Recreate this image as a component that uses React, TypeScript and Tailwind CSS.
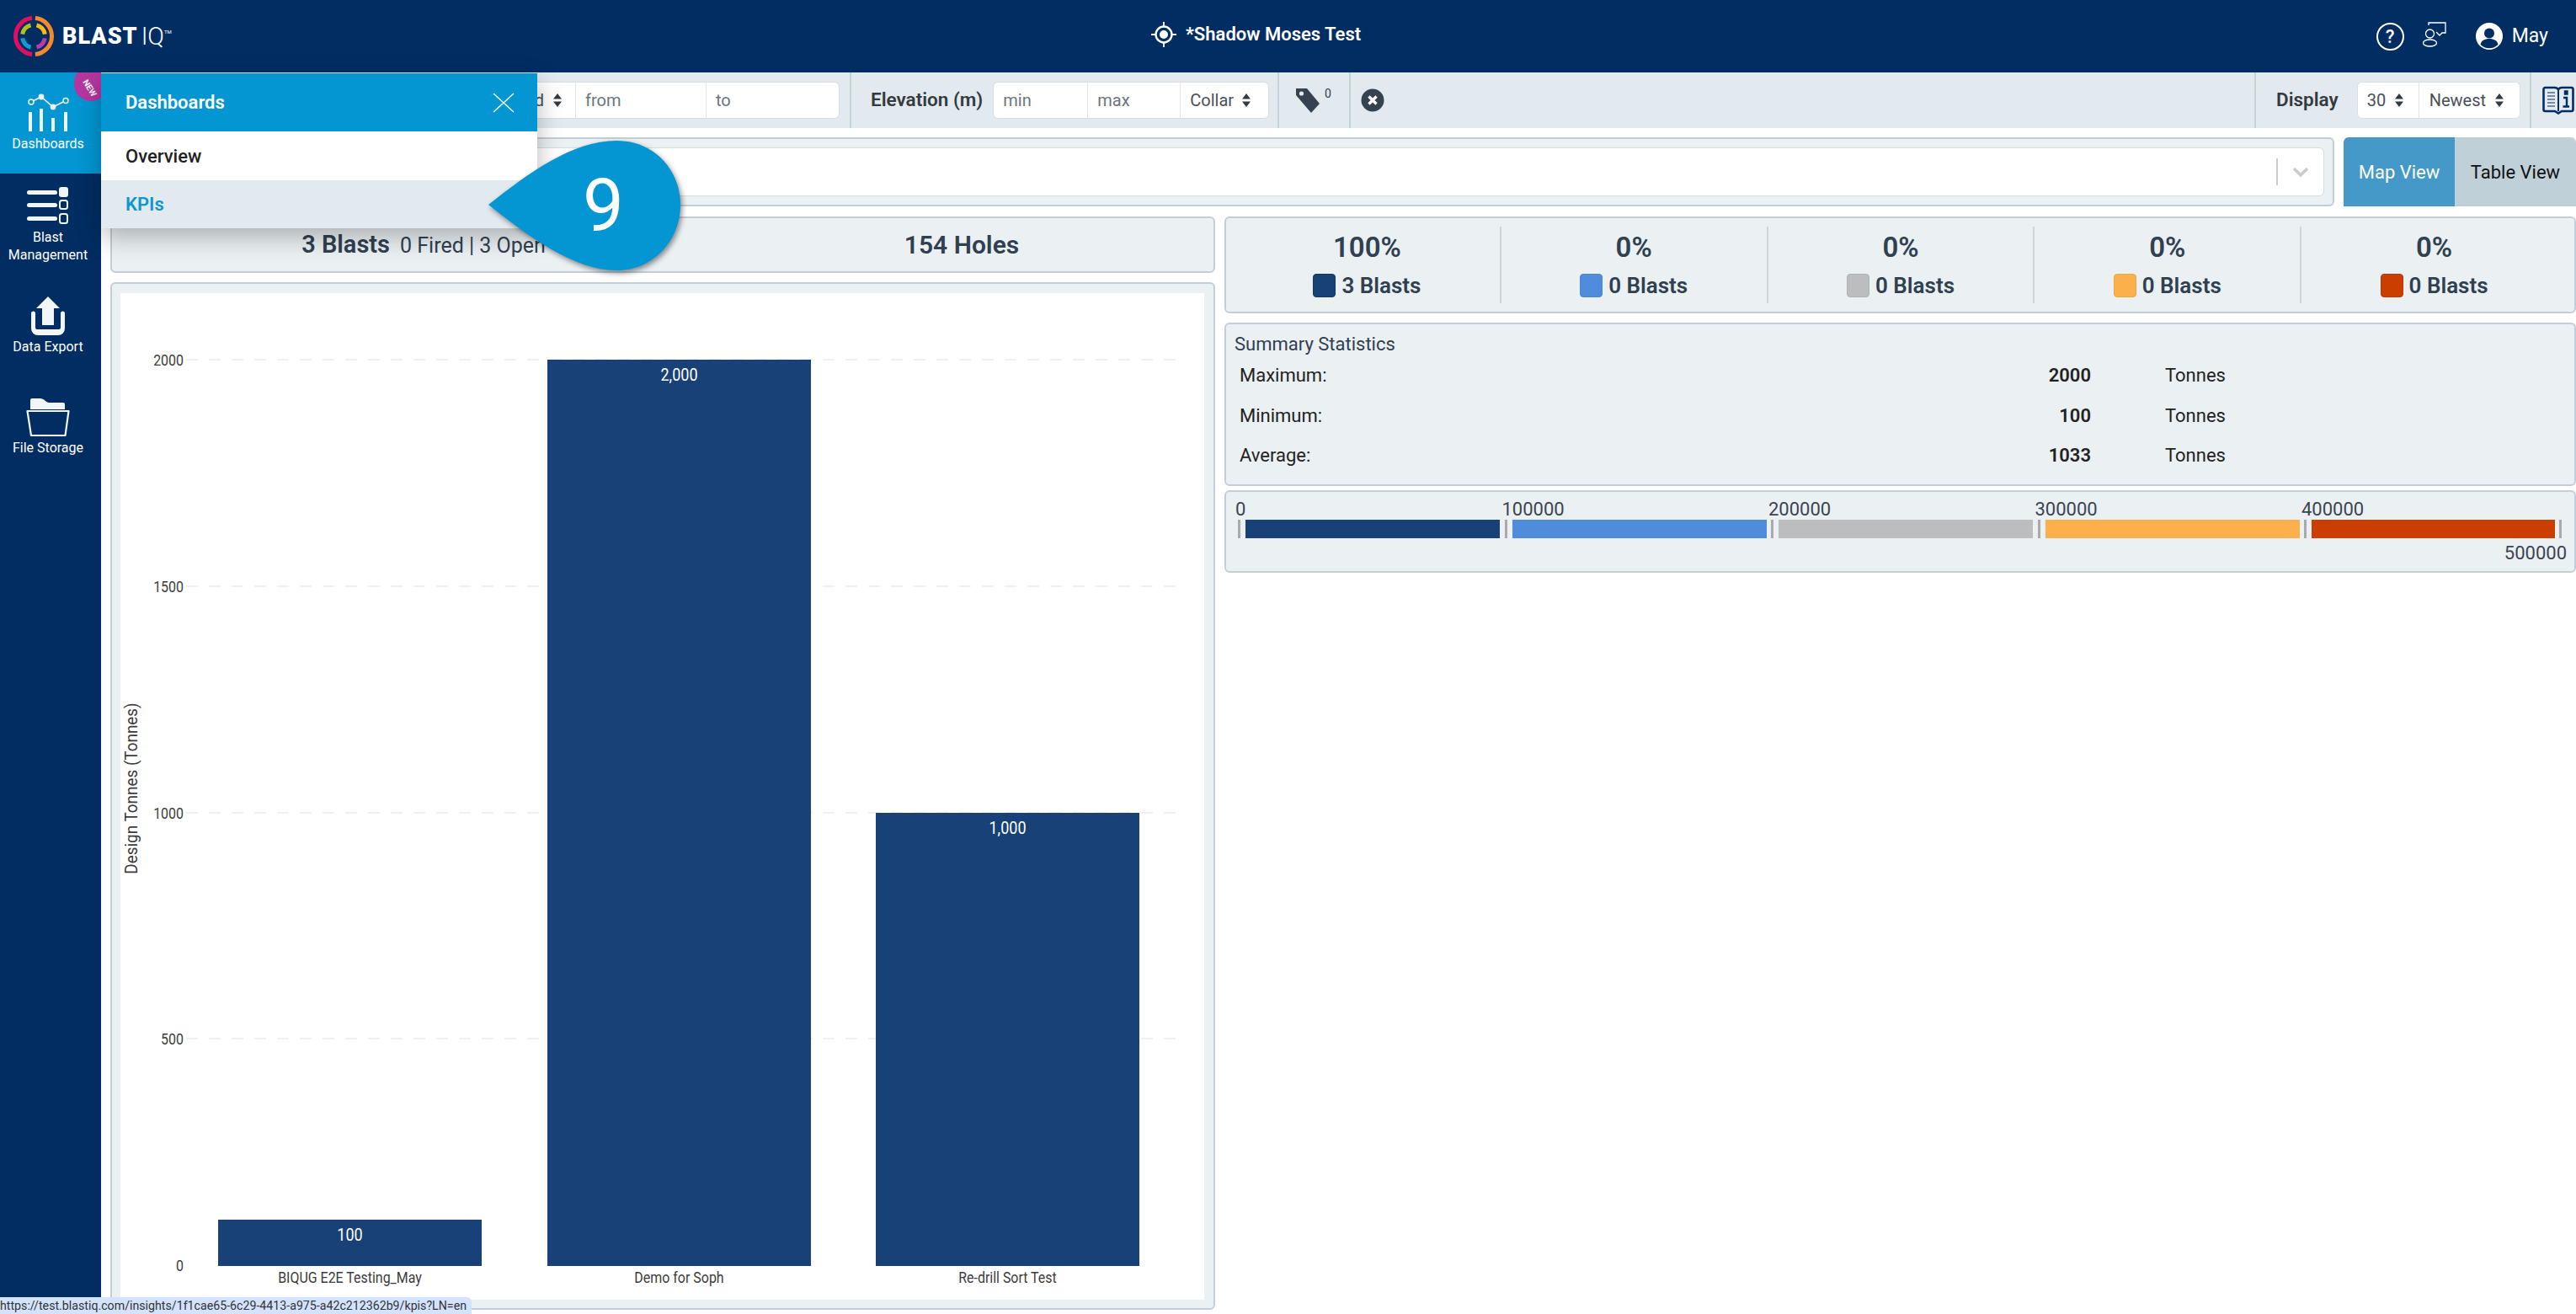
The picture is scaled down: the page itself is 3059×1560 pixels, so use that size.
const NAVY = '#012d63'

function arc(r: number, a0: number, a1: number) {
  const p = (a: number) => {
    const t = (a * Math.PI) / 180
    return `${(40 + r * Math.sin(t)).toFixed(2)} ${(40 - r * Math.cos(t)).toFixed(2)}`
  }
  return `M${p(a0)}A${r} ${r} 0 ${a1 - a0 > 180 ? 1 : 0} 1 ${p(a1)}`
}

function Logo() {
  return (
    <div className="flex items-center">
      <svg width="80" height="80" viewBox="0 0 80 80" fill="none" className="shrink-0 mr-[-6px]">
        <path d={arc(21.5, 5, 175)} stroke="#f58a2c" strokeWidth="5" />
        <path d={arc(21.5, 185, 355)} stroke="#e0105f" strokeWidth="5" />
        <path d={arc(13.5, 15, 80)} stroke="#fdba17" strokeWidth="5" />
        <path d={arc(13.5, 100, 165)} stroke="#b63cab" strokeWidth="5" />
        <path d={arc(13.5, 195, 260)} stroke="#0d9fd4" strokeWidth="5" />
        <path d={arc(13.5, 280, 345)} stroke="#b6bd1f" strokeWidth="5" />
      </svg>
      <span className="text-[27px] font-black text-white tracking-[1px] leading-none">BLAST</span>
      <span className="text-[29px] font-light text-white ml-[4px] leading-none">IQ</span>
      <span className="text-[6px] text-white self-start mt-[30px]">TM</span>
    </div>
  )
}

function Arrows({ className = '' }: { className?: string }) {
  return (
    <svg width="12" height="18" viewBox="0 0 12 18" className={className} fill="#343a40">
      <path d="M6 1l5 6.5H1zM6 17l5-6.5H1z" />
    </svg>
  )
}

function DashboardsIcon() {
  return (
    <svg width="54" height="46" viewBox="0 0 54 46" fill="none" className="ml-[3px]">
      <path d="M5 10L17 4L31 16L45 9" stroke="#eef3f6" strokeWidth="1.6" />
      <circle cx="5" cy="10" r="3" fill="#0396d3" stroke="#eef3f6" strokeWidth="1.5" />
      <circle cx="17" cy="4" r="3.4" fill="#eef3f6" />
      <circle cx="31" cy="16" r="3.4" fill="#eef3f6" />
      <circle cx="46" cy="8.5" r="3" fill="#0396d3" stroke="#eef3f6" strokeWidth="1.5" />
      <rect x="2" y="22" width="4" height="23" fill="#eef3f6" />
      <rect x="15" y="18" width="4" height="27" fill="#eef3f6" />
      <rect x="29" y="29" width="4" height="16" fill="#eef3f6" />
      <rect x="44" y="22" width="4" height="23" fill="#eef3f6" />
    </svg>
  )
}

function ManagementIcon() {
  return (
    <svg width="50" height="46" viewBox="0 0 50 46" fill="none">
      <rect x="0" y="5" width="36" height="5" rx="2.5" fill="#f3f6f8" />
      <rect x="38" y="1" width="11" height="12" rx="3" fill="#f3f6f8" />
      <rect x="0" y="20" width="36" height="5" rx="2.5" fill="#f3f6f8" />
      <rect x="39" y="17" width="9" height="10" rx="2.5" stroke="#f3f6f8" strokeWidth="2" />
      <rect x="0" y="36" width="36" height="5" rx="2.5" fill="#f3f6f8" />
      <rect x="39" y="33" width="9" height="11" rx="2.5" stroke="#f3f6f8" strokeWidth="2" />
    </svg>
  )
}

function ExportIcon() {
  return (
    <svg width="46" height="46" viewBox="0 0 46 46" fill="#f3f6f8">
      <path d="M23 0L37 14H30V34H16V14H9z" />
      <path d="M3 20a2.5 2.5 0 0 1 5 0V37a2 2 0 0 0 2 2H36a2 2 0 0 0 2-2V20a2.5 2.5 0 0 1 5 0V38a8 8 0 0 1-8 8H11a8 8 0 0 1-8-8z" />
    </svg>
  )
}

function FolderIcon() {
  return (
    <svg width="52" height="46" viewBox="0 0 52 46" fill="none">
      <path d="M5 14V3a2 2 0 0 1 2-2H16c3 0 5 1 7 3 1.500 1.500 3 2 5 2H44a2 2 0 0 1 2 2V14z" fill="#f3f6f8" />
      <path d="M1.500 16H50.500L46.500 45H6z" stroke="#f3f6f8" strokeWidth="2.200" strokeLinejoin="round" />
    </svg>
  )
}

function TargetIcon() {
  return (
    <svg width="30" height="30" viewBox="0 0 30 30" fill="none">
      <circle cx="15" cy="15" r="9.500" stroke="white" strokeWidth="2.400" />
      <circle cx="15" cy="15" r="5" fill="white" />
      <path d="M15 0V5M15 25V30M0 15H5M25 15H30" stroke="white" strokeWidth="1.800" />
    </svg>
  )
}

function FeedbackIcon() {
  return (
    <svg width="28" height="30" viewBox="0 0 28 30" fill="none" stroke="white" strokeWidth="1.300">
      <path d="M7 4V1H27V13H23L20 16L16 12" />
      <circle cx="8.500" cy="14" r="5" />
      <ellipse cx="8.500" cy="25" rx="8" ry="4" />
    </svg>
  )
}

function UserIcon() {
  return (
    <svg width="32" height="32" viewBox="0 0 32 32">
      <circle cx="16" cy="16" r="16" fill="white" />
      <circle cx="16" cy="12.500" r="6" fill={NAVY} />
      <path d="M5.500 26c1-5 5-7 10.500-7s9.500 2 10.500 7a15 15 0 0 1-21 0z" fill={NAVY} />
    </svg>
  )
}

function TagIcon() {
  return (
    <svg width="32" height="32" viewBox="0 0 32 32">
      <path d="M2 2H15L30 20L20 31L2 10z" fill="#34434f" />
      <circle cx="8.500" cy="8" r="2.600" fill="#e2eaef" />
    </svg>
  )
}

function CloseCircle() {
  return (
    <svg width="28" height="28" viewBox="0 0 28 28">
      <circle cx="14" cy="14" r="13.500" fill="#34434f" />
      <path d="M9.500 9.500L18.500 18.500M18.500 9.500L9.500 18.500" stroke="white" strokeWidth="3.400" />
    </svg>
  )
}

function BookIcon() {
  return (
    <svg width="38" height="34" viewBox="0 0 38 34" fill="none" stroke={NAVY}>
      <path d="M1.500 4a2 2 0 0 1 2-2H15c2 0 3 1 4 2 1-1 2-2 4-2H34.500a2 2 0 0 1 2 2V28a2 2 0 0 1-2 2H23l-4 2.500L15 30H3.500a2 2 0 0 1-2-2z" strokeWidth="2.600" />
      <path d="M19 4V30" strokeWidth="2" />
      <path d="M6 8H15M6 12H15M6 16H15M6 20H15M6 24H15" strokeWidth="1.200" />
      <path d="M25 14H29V24M24.500 24.500H32M27 6.500H29.500V9.500H27z" strokeWidth="2.400" />
    </svg>
  )
}

function Header() {
  return (
    <header className="h-[86px] shrink-0 flex items-center justify-between bg-[#012d63] text-white">
      <Logo />
      <div className="absolute left-[1367px] top-[24px] flex items-center gap-[11px]">
        <TargetIcon />
        <span className="text-[22px] font-semibold">*Shadow Moses Test</span>
      </div>
      <div className="flex items-center pr-[33px]">
        <div className="w-[33px] h-[33px] rounded-full border-2 border-white flex items-center justify-center text-[22px] font-medium">?</div>
        <div className="ml-[22px] mr-[35px] -mt-[4px]"><FeedbackIcon /></div>
        <UserIcon />
        <span className="ml-[11px] text-[23px]">May</span>
      </div>
    </header>
  )
}

function SideItem({ icon, label, className }: { icon: React.ReactNode; label: React.ReactNode; className: string }) {
  return (
    <div className={`flex flex-col items-center pr-[6px] ${className}`}>
      {icon}
      <div className="text-[16px] leading-[21px] text-white text-center whitespace-nowrap">{label}</div>
    </div>
  )
}

function Sidebar() {
  return (
    <aside className="w-[120px] shrink-0 bg-[#012d63] flex flex-col">
      <div className="relative overflow-hidden h-[120px] bg-[#0396d3] pt-[25px] flex flex-col items-center pr-[6px]">
        <DashboardsIcon />
        <div className="text-[16px] leading-[21px] text-white mt-[3px]">Dashboards</div>
        <div className="absolute left-[88px] -top-[8px] w-[40px] h-[42px] rounded-full bg-[#b5369f] flex items-center justify-center">
          <span className="text-[10px] font-bold text-white rotate-[58deg] mt-[10px] mr-[2px]">NEW</span>
        </div>
      </div>
      <SideItem className="pt-[15px] h-[146px] gap-[4px]" icon={<ManagementIcon />} label={<>Blast<br />Management</>} />
      <SideItem className="h-[120px] gap-[3px]" icon={<ExportIcon />} label="Data Export" />
      <SideItem className="gap-[3px]" icon={<FolderIcon />} label="File Storage" />
    </aside>
  )
}

const inputGroup = 'flex h-[44px] bg-white rounded-[6px] border border-[#d5dee4] text-[20px] text-[#6c757d]'

function Toolbar() {
  return (
    <div className="h-[66px] shrink-0 flex items-center bg-[#e2eaef] text-[#343a40]">
      <div className="w-[891px] h-full shrink-0 flex items-center justify-end pr-[12px] border-r-2 border-[#c3d2da]">
        <div className={inputGroup}>
          <div className="flex items-center gap-[10px] pl-[12px] pr-[15px] text-[#495057] border-r border-[#dfe5ea]">Fired <Arrows /></div>
          <div className="w-[155px] pl-[11px] flex items-center border-r border-[#dfe5ea]">from</div>
          <div className="w-[157px] pl-[11px] flex items-center">to</div>
        </div>
      </div>
      <div className="w-[508px] h-full shrink-0 flex items-center pl-[23px] border-r-2 border-[#c3d2da]">
        <span className="text-[22.5px] font-semibold mr-[12px] whitespace-nowrap">Elevation (m)</span>
        <div className={inputGroup}>
          <div className="w-[112px] pl-[11px] flex items-center border-r border-[#dfe5ea]">min</div>
          <div className="w-[110px] pl-[11px] flex items-center border-r border-[#dfe5ea]">max</div>
          <div className="w-[104px] pl-[11px] flex items-center gap-[9px] text-[#495057]">Collar <Arrows /></div>
        </div>
      </div>
      <div className="w-[85px] h-full shrink-0 flex items-center pl-[18px] border-r-2 border-[#c3d2da] relative">
        <TagIcon />
        <span className="text-[14px] -mt-[16px] ml-[4px]">0</span>
      </div>
      <div className="pl-[12px] flex-1 h-full flex items-center"><CloseCircle /></div>
      <div className="w-[327px] h-full shrink-0 flex items-center pl-[24px] border-l-2 border-[#c3d2da]">
        <span className="text-[22.5px] font-semibold mr-[22px]">Display</span>
        <div className={`${inputGroup} text-[#495057]`}>
          <div className="w-[73px] pl-[11px] flex items-center gap-[10px] border-r border-[#dfe5ea]">30 <Arrows /></div>
          <div className="w-[119px] pl-[12px] flex items-center gap-[10px]">Newest <Arrows /></div>
        </div>
      </div>
      <div className="flex-none h-full flex items-center w-[55px] pl-[13px] border-l-2 border-[#c3d2da]">
        <BookIcon />
      </div>
    </div>
  )
}

const panel = 'rounded-[6px] border-2 border-[#c3ced9] bg-[#ebf0f3]'

function SearchRow() {
  return (
    <div className="flex gap-[11px] pl-[11px] h-[82px] shrink-0">
      <div className={`${panel} flex-1 p-[10px]`}>
        <div className="h-full bg-white rounded-[6px] border border-[#d5dde2] flex items-center justify-end">
          <div className="w-[2px] h-[32px] bg-[#cccccc]" />
          <svg width="20" height="12" viewBox="0 0 20 12" fill="none" className="mx-[17px]">
            <path d="M2 2L10 10L18 2" stroke="#cccccc" strokeWidth="3.500" />
          </svg>
        </div>
      </div>
      <div className="w-[276px] flex rounded-t-[6px] overflow-hidden text-[22px]">
        <div className="w-[132px] bg-[#4499c9] text-white flex items-center justify-center">Map View</div>
        <div className="flex-1 bg-[#c0d0d9] text-[#111111] flex items-center justify-center">Table View</div>
      </div>
    </div>
  )
}

const ticks = [
  { v: '2000', y: 427 },
  { v: '1500', y: 696 },
  { v: '1000', y: 965 },
  { v: '500', y: 1233 },
  { v: '0', y: 1502 },
]

const bars = [
  { label: 'BIQUG E2E Testing_May', value: '100', x: 259, w: 313, y: 1448 },
  { label: 'Demo for Soph', value: '2,000', x: 650, w: 313, y: 427 },
  { label: 'Re-drill Sort Test', value: '1,000', x: 1040, w: 313, y: 965 },
]

function Chart() {
  // drawn in page coordinates, shifted by the white box's origin
  // chart labels are narrower than plain Roboto, hence the x scale
  return (
    <svg width="1287" height="1195" viewBox="143 348 1287 1195" className="block bg-white">
      {ticks.slice(0, 4).map(t => (
        <line key={t.v} x1="221" x2="1396" y1={t.y} y2={t.y} stroke="#f0f0f0" strokeWidth="2" strokeDasharray="14 13" />
      ))}
      {ticks.map(t => (
        <text key={t.v} transform={`translate(218 ${t.y + 7}) scale(0.84 1)`} textAnchor="end" fontSize="19" fill="#3c3c3c">{t.v}</text>
      ))}
      <text transform="translate(163 936) rotate(-90) scale(0.9 1)" textAnchor="middle" fontSize="21" fill="#3c3c3c">Design Tonnes (Tonnes)</text>
      {bars.map(b => (
        <g key={b.label}>
          <rect x={b.x} y={b.y} width={b.w} height={1503 - b.y} fill="#184178" />
          <text transform={`translate(${b.x + b.w / 2} ${b.y + 25}) scale(0.857 1)`} textAnchor="middle" fontSize="21" fill="white">{b.value}</text>
          <text transform={`translate(${b.x + b.w / 2} 1523) scale(0.84 1)`} textAnchor="middle" fontSize="19" fill="#3c3c3c">{b.label}</text>
        </g>
      ))}
    </svg>
  )
}

const shares = [
  { pct: '100%', label: '3 Blasts', swatch: 'bg-[#184178] border-[#123665]' },
  { pct: '0%', label: '0 Blasts', swatch: 'bg-[#4f8ddc] border-[#4a86d2]' },
  { pct: '0%', label: '0 Blasts', swatch: 'bg-[#bcbdbf] border-[#b0b1b3]' },
  { pct: '0%', label: '0 Blasts', swatch: 'bg-[#fbb04c] border-[#eea642]' },
  { pct: '0%', label: '0 Blasts', swatch: 'bg-[#cc3d00] border-[#c03800]' },
]

const stats = [
  { label: 'Maximum:', value: '2000' },
  { label: 'Minimum:', value: '100' },
  { label: 'Average:', value: '1033' },
]

const scale = [
  { from: '0', color: 'bg-[#184178]' },
  { from: '100000', color: 'bg-[#4f8ddc]' },
  { from: '200000', color: 'bg-[#bcbdbf]' },
  { from: '300000', color: 'bg-[#fbb04c]' },
  { from: '400000', color: 'bg-[#cc3d00]' },
]

function RightColumn() {
  return (
    <div className="flex-1 min-w-0 flex flex-col text-[#222222]">
      <div className={`${panel} h-[115px] flex items-center pl-[10px] pr-[9px]`}>
        {shares.map((s, i) => (
          <div key={i} className={`flex-1 h-[91px] pb-[4px] flex flex-col items-center justify-center ${i < 4 ? 'border-r-2 border-[#d0d5d9]' : ''}`}>
            <div className="text-[33px] leading-[44px] font-semibold text-[#2f4050]">{s.pct}</div>
            <div className="flex items-center gap-[7px] mt-[8px]">
              <span className={`w-[27px] h-[28px] rounded-[4px] border ${s.swatch}`} />
              <span className="text-[26px] leading-[30px] font-semibold text-[#2f4050]">{s.label}</span>
            </div>
          </div>
        ))}
      </div>
      <div className={`${panel} mt-[11px] h-[194px] pt-[11px] pl-[10px] text-[22px]`}>
        <div className="leading-[26px] text-[#2f4050]">Summary Statistics</div>
        <div className="pl-[6px]">
          {stats.map(s => (
            <div key={s.label} className="flex h-[47.500px] items-center">
              <span className="w-[914px]">{s.label}</span>
              <span className="w-[97px] text-right font-semibold">{s.value}</span>
              <span className="ml-[88px]">Tonnes</span>
            </div>
          ))}
        </div>
      </div>
      <div className={`${panel} mt-[5px] h-[98px] pt-[8px] pl-[11px] pr-[9px] text-[22px] text-[#3a4550]`}>
        <div className="flex">
          {scale.map(s => (
            <div key={s.from} className="w-[316.500px] shrink-0 leading-[26px]">{s.from}</div>
          ))}
        </div>
        <div className="flex h-[22px] -mt-[1px] pl-[3px]">
          {scale.map((s, i) => (
            <div key={s.from} className="flex shrink-0 w-[316.500px]">
              <div className="w-[3px] bg-[#aaaaaa]" />
              <div className={`${s.color} ml-[6px] ${i === 4 ? 'w-[289px]' : 'w-[302px]'}`} />
              {i === 4 && <div className="w-[3px] bg-[#aaaaaa] ml-[5px]" />}
            </div>
          ))}
        </div>
        <div className="text-right leading-[26px] mt-[5px]">500000</div>
      </div>
    </div>
  )
}

function DashboardsMenu() {
  return (
    <div className="absolute left-[120px] top-[87px] w-[518px] shadow-[0_10px_28px_rgba(0,0,0,0.28)]">
      <div className="h-[69px] bg-[#0396d3] flex items-center justify-between pl-[29px] pr-[27px] text-white">
        <span className="text-[22px] font-semibold">Dashboards</span>
        <svg width="26" height="24" viewBox="0 0 26 24" stroke="white" strokeWidth="1.500">
          <path d="M1 1L25 23M25 1L1 23" />
        </svg>
      </div>
      <div className="h-[58px] bg-white flex items-center pl-[29px] text-[22px] font-medium text-[#222222]">Overview</div>
      <div className="h-[57px] bg-[#e2eaef] flex items-center pl-[29px] text-[22px] font-semibold text-[#0e97d1]">KPIs</div>
    </div>
  )
}

function Callout() {
  return (
    <div className="absolute left-[575px] top-[160px] w-[240px] h-[170px] drop-shadow-[2px_3px_3px_rgba(0,0,0,0.45)]">
      <svg width="240" height="170" viewBox="575 160 240 170" className="absolute inset-0">
        <path d="M580 243C628 205 680 167 732 167C778 167 808 203 808 243C808 285 776 321 732 321C682 321 628 281 580 243z" fill="#0396d3" />
      </svg>
      <span className="absolute left-[117px] top-[32px] text-[87px] leading-[104px] font-normal text-white">9</span>
    </div>
  )
}

export default function App() {
  return (
    <div className="relative w-[3059px] h-[1560px] overflow-hidden bg-white flex flex-col [font-family:Roboto,sans-serif]">
      <Header />
      <div className="flex flex-1 min-h-0">
        <Sidebar />
        <main className="flex-1 min-w-0 flex flex-col">
          <Toolbar />
          <div className="h-[11px] shrink-0" />
          <SearchRow />
          <div className="flex gap-[11px] pl-[11px] mt-[12px]">
            <div className="w-[1312px] shrink-0 flex flex-col">
              <div className={`${panel} h-[67px] flex items-center`}>
                <div className="w-[740px] flex items-baseline justify-center text-[#2f4050]">
                  <span className="text-[29px] font-semibold">3 Blasts</span>
                  <span className="text-[25px] ml-[12px]">0 Fired | 3 Open</span>
                </div>
                <div className="w-[538px] text-center text-[30px] font-semibold text-[#2f4050]">154 Holes</div>
              </div>
              <div className={`${panel} mt-[11px] h-[1220px] pt-[11px] pl-[10px]`}>
                <Chart />
              </div>
            </div>
            <RightColumn />
          </div>
        </main>
      </div>
      <DashboardsMenu />
      <Callout />
      <div className="absolute left-0 bottom-0 w-[560px] h-[20px] bg-[#d3e3fd] rounded-tr-[6px] overflow-hidden text-[14.2px] leading-[20px] text-[#333333] whitespace-nowrap">
        https://test.blastiq.com/insights/1f1cae65-6c29-4413-a975-a42c212362b9/kpis?LN=en
      </div>
    </div>
  )
}
